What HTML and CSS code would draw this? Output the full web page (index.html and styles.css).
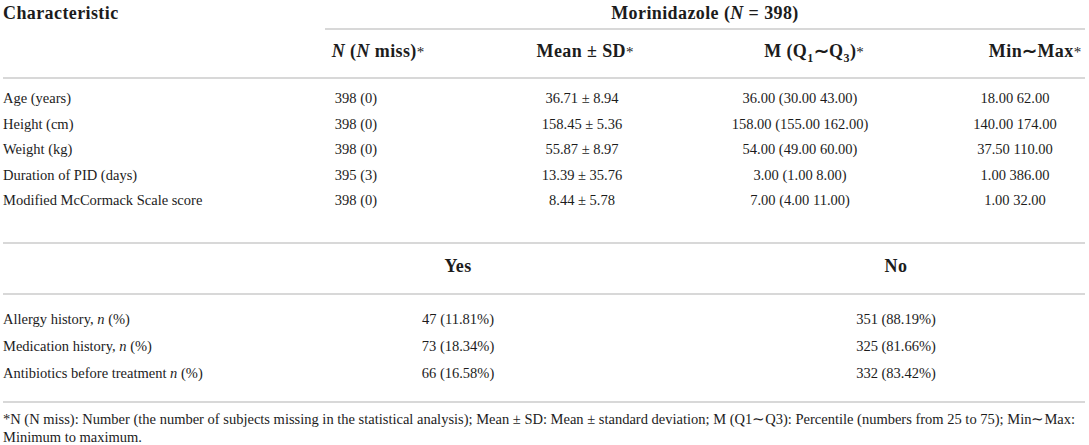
FILE: index.html
```html
<!DOCTYPE html>
<html lang="en">
<head>
  <meta charset="UTF-8" />
  <meta name="viewport" content="width=device-width, initial-scale=1.0" />
  <title>Morinidazole baseline characteristics</title>
  <link rel="stylesheet" href="styles.css">
</head>
<body>
  <div class="table">
    <div class="grid main head-top">
      <div class="title">Characteristic</div>
      <div class="group">Morinidazole (<i>N</i> = 398)</div>
    </div>

    <div class="grid main head-sub">
      <div></div>
      <div class="h2"><i>N</i> (<i>N</i> miss)<span class="mark">*</span></div>
      <div class="h3">Mean ± SD<span class="mark">*</span></div>
      <div class="h4">M (Q<sub>1</sub>∼Q<sub>3</sub>)<span class="mark">*</span></div>
      <div class="h5">Min∼Max<span class="mark">*</span></div>
    </div>

    <div class="grid main body">
      <div class="label">Age (years)</div>
      <div>398 (0)</div>
      <div>36.71 ± 8.94</div>
      <div>36.00 (30.00 43.00)</div>
      <div>18.00 62.00</div>

      <div class="label">Height (cm)</div>
      <div>398 (0)</div>
      <div>158.45 ± 5.36</div>
      <div>158.00 (155.00 162.00)</div>
      <div>140.00 174.00</div>

      <div class="label">Weight (kg)</div>
      <div>398 (0)</div>
      <div>55.87 ± 8.97</div>
      <div>54.00 (49.00 60.00)</div>
      <div>37.50 110.00</div>

      <div class="label">Duration of PID (days)</div>
      <div>395 (3)</div>
      <div>13.39 ± 35.76</div>
      <div>3.00 (1.00 8.00)</div>
      <div>1.00 386.00</div>

      <div class="label">Modified McCormack Scale score</div>
      <div>398 (0)</div>
      <div>8.44 ± 5.78</div>
      <div>7.00 (4.00 11.00)</div>
      <div>1.00 32.00</div>
    </div>

    <div class="grid yn head-yn">
      <div></div>
      <div>Yes</div>
      <div>No</div>
    </div>

    <div class="grid yn body body-yn">
      <div class="label">Allergy history, <i>n</i> (%)</div>
      <div>47 (11.81%)</div>
      <div>351 (88.19%)</div>

      <div class="label">Medication history, <i>n</i> (%)</div>
      <div>73 (18.34%)</div>
      <div>325 (81.66%)</div>

      <div class="label">Antibiotics before treatment <i>n</i> (%)</div>
      <div>66 (16.58%)</div>
      <div>332 (83.42%)</div>
    </div>

    <p class="note">*N (N miss): Number (the number of subjects missing in the statistical analysis); Mean ± SD: Mean ± standard deviation; M (Q1∼Q3): Percentile (numbers from 25 to 75); Min∼Max: Minimum to maximum.</p>
  </div>
</body>
</html>
```

FILE: styles.css
```css
* {
  box-sizing: border-box;
  margin: 0;
  padding: 0;
}

body {
  background: #fff;
  color: #1c1c1c;
  font-family: 'Liberation Serif', 'Times New Roman', serif;
  font-size: 14.5px;
}

.table {
  padding: 0 4px 0 3px;
}

.grid {
  display: grid;
}

.main {
  grid-template-columns: 200px 306px 146px 290px 140px;
}

.yn {
  grid-template-columns: 206px 498px 378px;
}

.head-top,
.head-sub,
.head-yn {
  font-size: 18px;
  font-weight: bold;
  letter-spacing: 0.4px;
  line-height: 22px;
}

.head-top > div {
  padding: 2px 0 4px;
}

.group {
  grid-column: 2 / -1;
  margin-left: 122px;
  text-align: center;
  border-bottom: 2px solid #d8d8d8;
}

.head-sub > div {
  padding: 10px 0 14px;
  text-align: center;
  border-bottom: 2px solid #d8d8d8;
  white-space: nowrap;
}

.head-sub .h2 { padding-left: 44px; }
.head-sub .h3 { padding-left: 6px; }
.head-sub .h4 { padding-left: 28px; }
.head-sub .h5 { padding-left: 40px; }

.mark {
  font-weight: normal;
  font-size: 15px;
  letter-spacing: 0;
}

sub {
  font-size: 12px;
  line-height: 0;
}

.body > div {
  text-align: center;
  white-space: nowrap;
}

.body > .label {
  text-align: left;
}

.main.body {
  padding: 7px 0 28.5px;
  line-height: 25.5px;
}

.head-yn {
  border-top: 2px solid #d8d8d8;
  border-bottom: 2px solid #d8d8d8;
  padding: 11px 0 16px;
  text-align: center;
}

.body-yn {
  padding: 10.5px 0 14.5px;
  line-height: 27px;
}

.note {
  border-top: 2px solid #d8d8d8;
  padding-top: 8px;
  line-height: 17.5px;
}
```
